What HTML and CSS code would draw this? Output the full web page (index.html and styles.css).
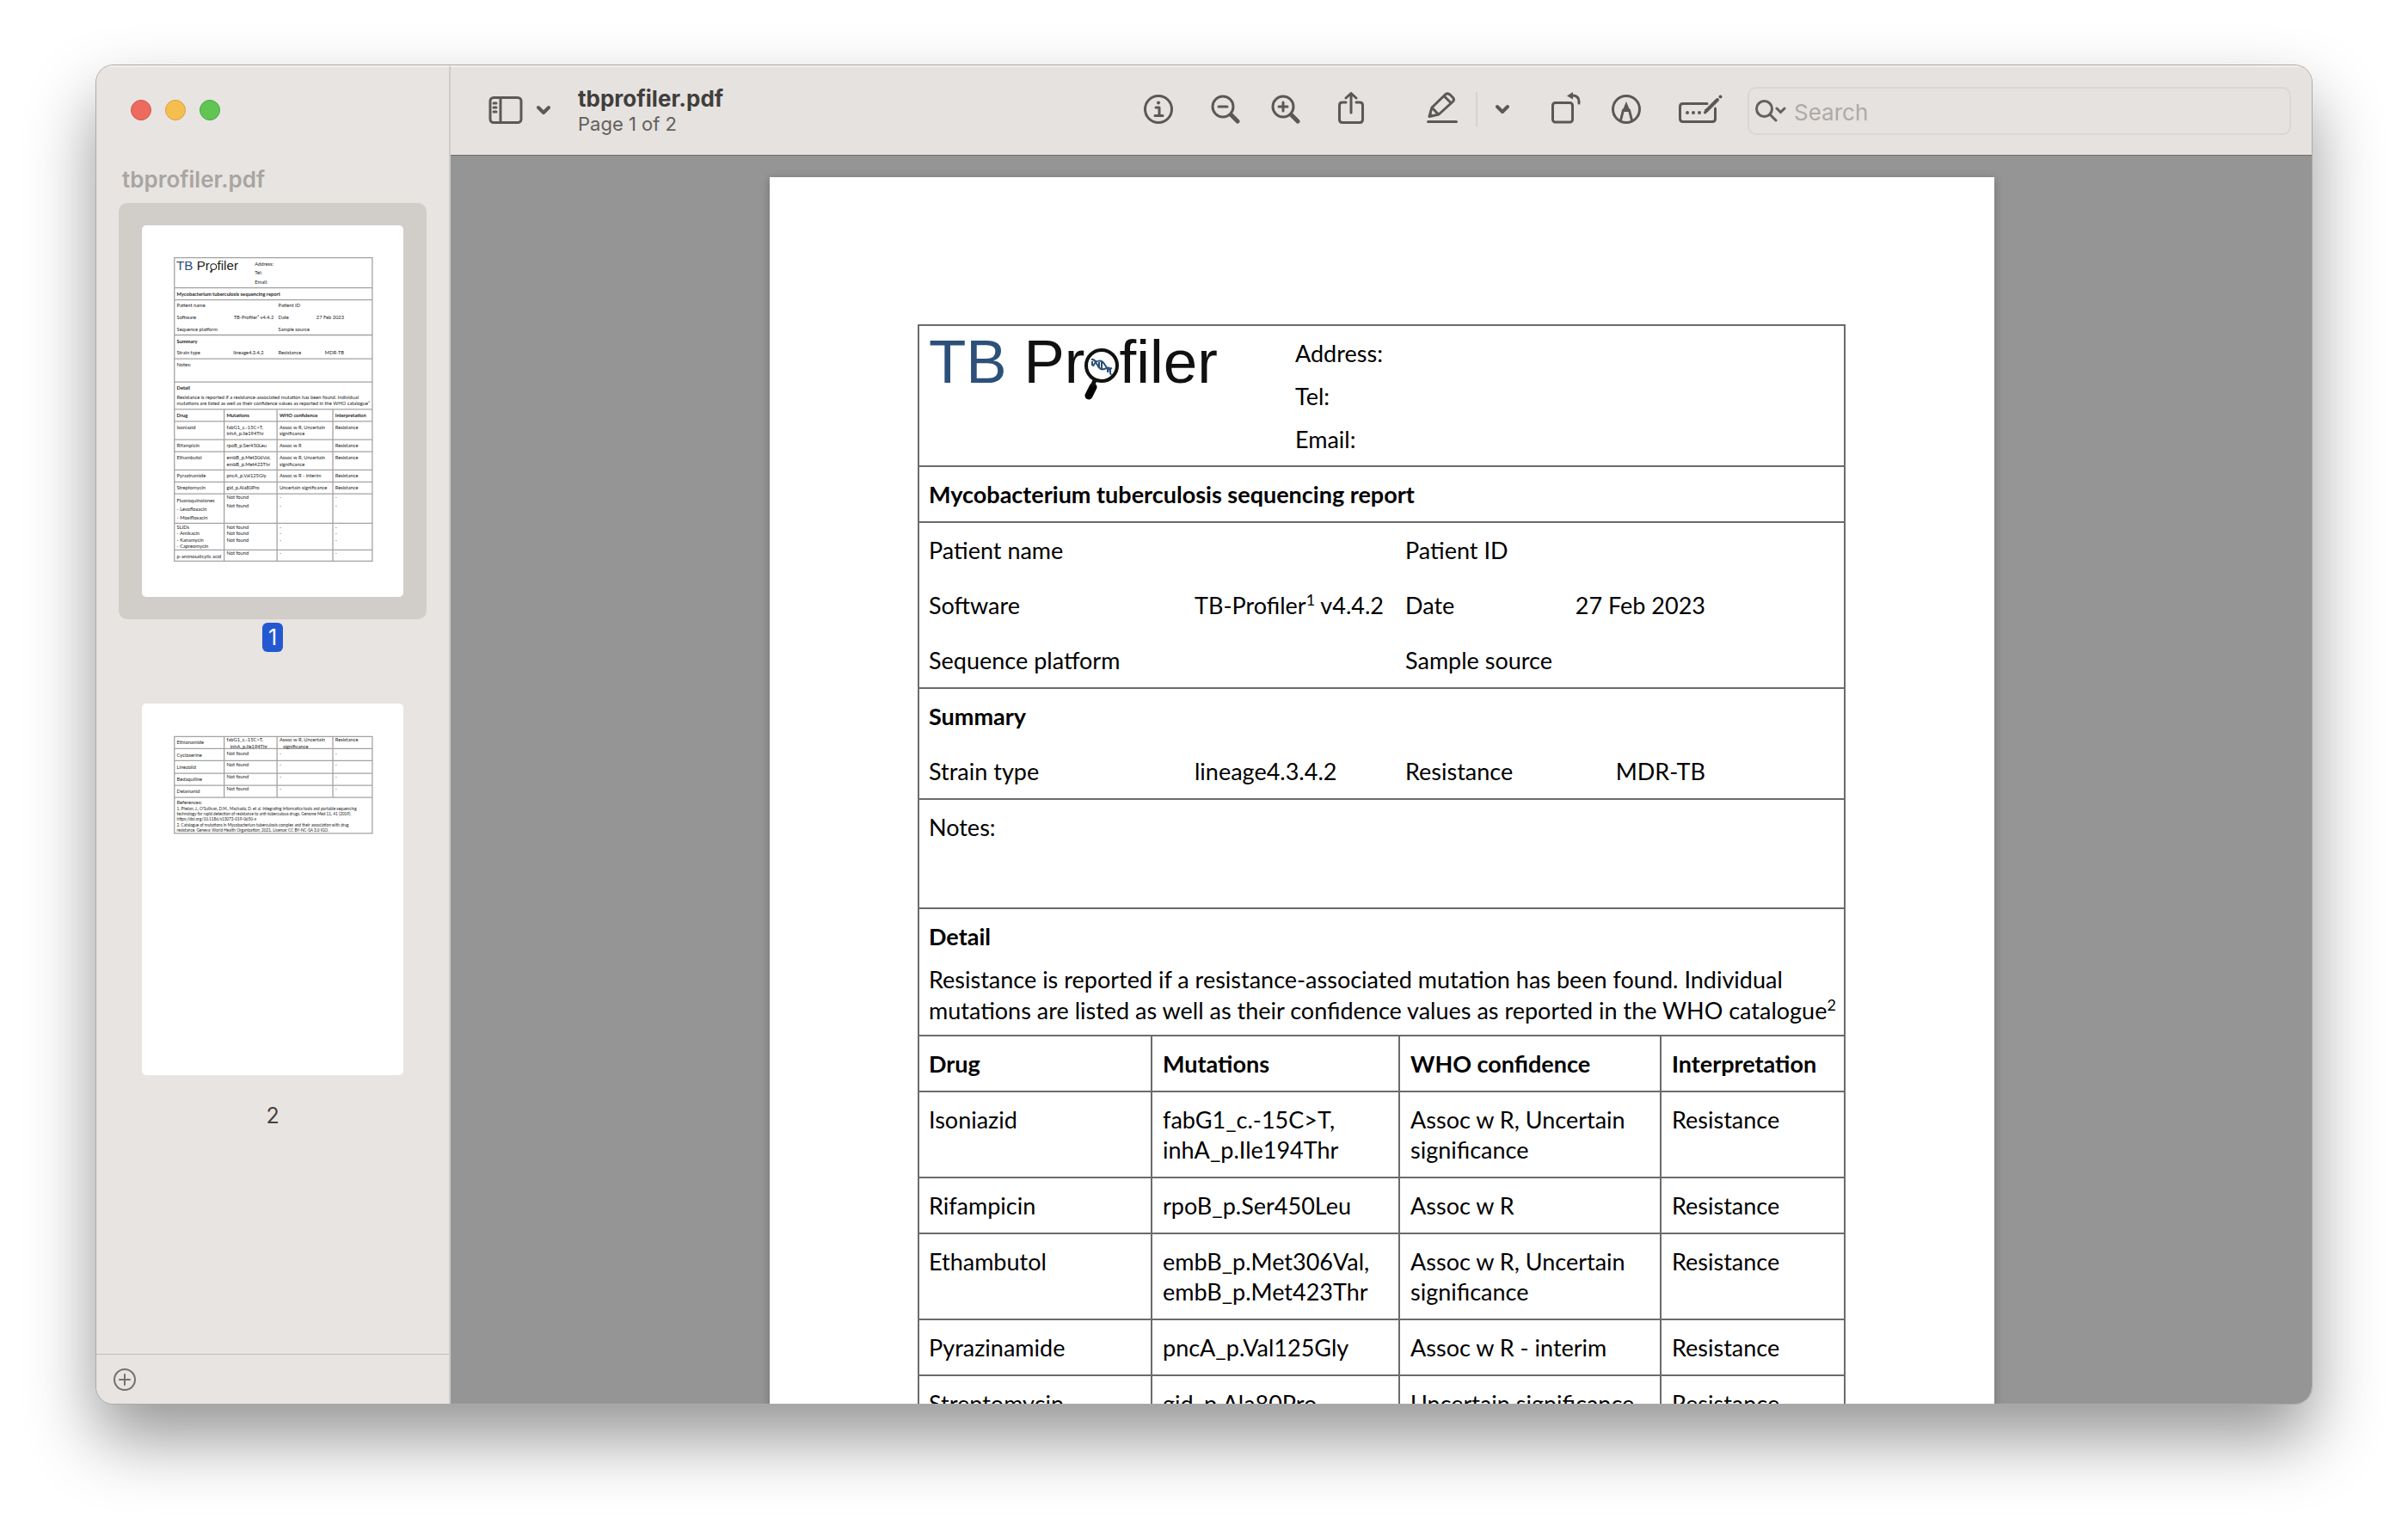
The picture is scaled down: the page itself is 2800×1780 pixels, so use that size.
FILE: index.html
```html
<!DOCTYPE html>
<html lang="en">
<head>
<meta charset="utf-8">
<title>tbprofiler.pdf</title>
<link rel="stylesheet" href="styles.css">
</head>
<body>
<div class="window">
  <aside class="sidebar">
    <div class="lights">
      <button class="light close" aria-label="Close"></button>
      <button class="light minimise" aria-label="Minimise"></button>
      <button class="light zoom" aria-label="Zoom"></button>
    </div>
    <h2 class="side-title">tbprofiler.pdf</h2>
    <div class="thumbs">
      <figure class="thumb">
        <button class="thumb-frame selected" aria-label="Go to page 1">
          <svg class="thumb-page" viewBox="-4 -4 1424 2023">
            <path class="rule" d="M173 172H1251V1824H173ZM173 336H1251M173 401H1251M173 593H1251M173 722H1251M173 849H1251M173 998H1251M173 1063H1251M173 1163H1251M173 1228H1251M173 1328H1251M173 1393H1251M173 1458H1251M173 1618H1251M173 1763H1251M444 998V1824M732 998V1824M1036 998V1824"/>
            <g class="mini-logo"><text x="184" y="239"><tspan class="blue">TB</tspan> Pr</text><text x="406" y="239">filer</text>
              <circle cx="386" cy="221" r="16"/><path d="M378 238L370 252"/></g>
            <g class="mini">
              <text x="611" y="214">Address:</text><text x="611" y="264">Tel:</text><text x="611" y="313">Email:</text>
              <text class="b" x="186" y="378">Mycobacterium tuberculosis sequencing report</text>
              <text x="186" y="443">Patient name</text><text x="739" y="443">Patient ID</text>
              <text x="186" y="507">Software</text><text x="496" y="507">TB-Profiler¹ v4.4.2</text><text x="739" y="507">Date</text><text x="946" y="507">27 Feb 2023</text>
              <text x="186" y="571">Sequence platform</text><text x="739" y="571">Sample source</text>
              <text class="b" x="186" y="636">Summary</text>
              <text x="186" y="700">Strain type</text><text x="494" y="700">lineage4.3.4.2</text><text x="739" y="700">Resistance</text><text x="993" y="700">MDR-TB</text>
              <text x="186" y="764">Notes:</text>
              <text class="b" x="186" y="892">Detail</text>
              <text x="186" y="941">Resistance is reported if a resistance-associated mutation has been found. Individual</text>
              <text x="186" y="977">mutations are listed as well as their confidence values as reported in the WHO catalogue²</text>
              <g class="b"><text x="186" y="1040">Drug</text><text x="457" y="1040">Mutations</text><text x="745" y="1040">WHO confidence</text><text x="1049" y="1040">Interpretation</text></g>
              <text x="186" y="1105">Isoniazid</text><text x="457" y="1105">fabG1_c.-15C&gt;T,</text><text x="457" y="1141">inhA_p.Ile194Thr</text><text x="745" y="1105">Assoc w R, Uncertain</text><text x="745" y="1141">significance</text><text x="1049" y="1105">Resistance</text>
              <text x="186" y="1205">Rifampicin</text><text x="457" y="1205">rpoB_p.Ser450Leu</text><text x="745" y="1205">Assoc w R</text><text x="1049" y="1205">Resistance</text>
              <text x="186" y="1270">Ethambutol</text><text x="457" y="1270">embB_p.Met306Val,</text><text x="457" y="1306">embB_p.Met423Thr</text><text x="745" y="1270">Assoc w R, Uncertain</text><text x="745" y="1306">significance</text><text x="1049" y="1270">Resistance</text>
              <text x="186" y="1370">Pyrazinamide</text><text x="457" y="1370">pncA_p.Val125Gly</text><text x="745" y="1370">Assoc w R - interim</text><text x="1049" y="1370">Resistance</text>
              <text x="186" y="1435">Streptomycin</text><text x="457" y="1435">gid_p.Ala80Pro</text><text x="745" y="1435">Uncertain significance</text><text x="1049" y="1435">Resistance</text>
              <text x="186" y="1502">Fluoroquinolones</text><text x="186" y="1551">- Levofloxacin</text><text x="186" y="1598">- Moxifloxacin</text>
              <text x="457" y="1484">Not found</text><text x="457" y="1534">Not found</text><text x="745" y="1484">-</text><text x="745" y="1534">-</text><text x="1049" y="1484">-</text><text x="1049" y="1534">-</text>
              <text x="186" y="1650">SLIDs</text><text x="186" y="1684">- Amikacin</text><text x="186" y="1720">- Kanamycin</text><text x="186" y="1754">- Capreomycin</text>
              <text x="457" y="1650">Not found</text><text x="457" y="1684">Not found</text><text x="457" y="1720">Not found</text>
              <text x="745" y="1650">-</text><text x="745" y="1684">-</text><text x="745" y="1720">-</text><text x="1049" y="1650">-</text><text x="1049" y="1684">-</text><text x="1049" y="1720">-</text>
              <text x="186" y="1808">p-aminosalicylic acid</text><text x="457" y="1790">Not found</text><text x="745" y="1790">-</text><text x="1049" y="1790">-</text>
            </g>
          </svg>
        </button>
        <figcaption class="page-no current">1</figcaption>
      </figure>
      <figure class="thumb">
        <button class="thumb-frame" aria-label="Go to page 2">
          <svg class="thumb-page" viewBox="-4 -4 1424 2023">
            <path class="rule" d="M173 175H1251V702H173ZM173 241H1251M173 307H1251M173 376H1251M173 441H1251M173 507H1251M444 175V507M732 175V507M1036 175V507"/>
            <g class="mini">
              <text x="186" y="216">Ethionamide</text><text x="457" y="203">fabG1_c.-15C&gt;T,</text><text x="477" y="238">inhA_p.Ile194Thr</text><text x="745" y="203">Assoc w R, Uncertain</text><text x="765" y="238">significance</text><text x="1049" y="203">Resistance</text>
              <text x="186" y="288">Cycloserine</text><text x="457" y="277">Not found</text><text x="745" y="277">-</text><text x="1049" y="277">-</text>
              <text x="186" y="353">Linezolid</text><text x="457" y="339">Not found</text><text x="745" y="339">-</text><text x="1049" y="339">-</text>
              <text x="186" y="418">Bedaquiline</text><text x="457" y="405">Not found</text><text x="745" y="405">-</text><text x="1049" y="405">-</text>
              <text x="186" y="484">Delamanid</text><text x="457" y="471">Not found</text><text x="745" y="471">-</text><text x="1049" y="471">-</text>
              <text x="186" y="546">References:</text>
            </g>
            <g class="mini notes">
              <text x="186" y="578">1. Phelan, J., O'Sullivan, D.M., Machado, D. et al. Integrating informatics tools and portable sequencing</text>
              <text x="186" y="607">technology for rapid detection of resistance to anti-tuberculous drugs. Genome Med 11, 41 (2019).</text>
              <text x="186" y="635">https://doi.org/10.1186/s13073-019-0650-x</text>
              <text x="186" y="665">2. Catalogue of mutations in Mycobacterium tuberculosis complex and their association with drug</text>
              <text x="186" y="693">resistance. Geneva: World Health Organization; 2021. Licence: CC BY-NC-SA 3.0 IGO.</text>
            </g>
          </svg>
        </button>
        <figcaption class="page-no">2</figcaption>
      </figure>
    </div>
    <footer class="side-foot">
      <button class="icon" aria-label="Add page"><svg width="26" height="26" viewBox="0 0 26 26"><circle cx="13" cy="13" r="12"/><path d="M13 7V19M7 13H19"/></svg></button>
    </footer>
  </aside>

  <div class="viewer">
    <header class="toolbar">
      <button class="icon view-menu" aria-label="Sidebar view">
        <svg width="40" height="32" viewBox="0 0 40 32"><rect x="2" y="1.500" width="36" height="29" rx="4"/><path d="M14 2V30M6 8H9M6 13H9M6 18H9"/></svg>
        <svg width="16" height="12" viewBox="0 0 16 12"><path class="heavy" d="M2 3L8 9L14 3"/></svg>
      </button>
      <div class="heading">
        <h1 class="title">tbprofiler.pdf</h1>
        <p class="subtitle">Page 1 of 2</p>
      </div>
      <div class="tools">
        <button class="icon" aria-label="Info"><svg width="34" height="40" viewBox="0 0 34 40"><circle cx="17" cy="20" r="15.500"/><path d="M14 18H18V27M13 27.500H22"/><circle class="solid" cx="17" cy="12.500" r="2"/></svg></button>
        <div class="pair">
          <button class="icon" aria-label="Zoom out"><svg width="34" height="40" viewBox="0 0 34 40"><circle cx="14" cy="17" r="12"/><path d="M9 17H19"/><path class="thick" d="M23.500 26.500L31 34"/></svg></button>
          <button class="icon" aria-label="Zoom in"><svg width="34" height="40" viewBox="0 0 34 40"><circle cx="14" cy="17" r="12"/><path d="M9 17H19M14 12V22"/><path class="thick" d="M23.500 26.500L31 34"/></svg></button>
        </div>
        <button class="icon" aria-label="Share"><svg width="30" height="40" viewBox="0 0 30 40"><path d="M9 12H5Q1.500 12 1.500 15.500V32Q1.500 35.500 5 35.500H25Q28.500 35.500 28.500 32V15.500Q28.500 12 25 12H21M15 24V2M9 7L15 1.500L21 7"/></svg></button>
        <div class="split">
          <button class="icon" aria-label="Highlight"><svg width="36" height="40" viewBox="0 0 36 40"><path d="M1.500 34.500H34.500M3 28.500L6 18L22 2.500Q24.500 1 27 3L30.500 6.500Q32.500 9 30.500 11L14 26ZM6.500 18.500L13 25.500M20.500 5L28 12.500"/><path class="solid" d="M2 30L4 24L8 27.500Z"/></svg></button>
          <span class="divider"></span>
          <button class="icon" aria-label="Highlight colours"><svg width="16" height="12" viewBox="0 0 16 12"><path class="heavy" d="M2 3L8 9L14 3"/></svg></button>
        </div>
        <div class="pair">
          <button class="icon" aria-label="Rotate"><svg width="34" height="40" viewBox="0 0 34 40"><rect x="1.500" y="12.500" width="23" height="22.500" rx="3"/><path d="M32 13V11Q32 4 24 4"/><path class="solid" d="M25 0V8.500L18 4.500Z"/></svg></button>
          <button class="icon" aria-label="Markup"><svg width="34" height="40" viewBox="0 0 34 40"><circle cx="17" cy="20" r="15.500"/><path d="M10.500 33L13.500 21M23.500 33L20.500 21"/><path class="solid" d="M17 11L12 23H22Z"/></svg></button>
        </div>
        <button class="icon" aria-label="Form filling"><svg width="52" height="40" viewBox="0 0 52 40"><path d="M33 13.500H5Q1.500 13.500 1.500 17V31Q1.500 34.500 5 34.500H39Q42.500 34.500 42.500 31V19"/><path class="heavy" d="M32 22L45 9"/><path d="M30.500 24L32 21"/><circle class="solid" cx="48.500" cy="5.500" r="2"/><circle class="solid" cx="10" cy="24" r="2"/><circle class="solid" cx="17" cy="24" r="2"/><circle class="solid" cx="24" cy="24" r="2"/></svg></button>
      </div>
      <label class="search">
        <svg class="search-icon" width="36" height="28" viewBox="0 0 36 28"><circle cx="10.500" cy="11.500" r="9"/><path d="M17 18L24 25M25 11L29.500 15.500L34 11"/></svg>
        <input type="search" placeholder="Search" aria-label="Search">
      </label>
    </header>

    <main class="canvas">
      <article class="page">
        <div class="report">
          <section class="band masthead">
            <div class="logo"><span class="blue">TB</span> Pr<svg class="lens" width="40" height="64" viewBox="0 0 40 64"><circle cx="20" cy="22" r="18"/><path class="grip" d="M10 47L5 57"/><path class="neck" d="M13 37L9 46"/><path class="dna" d="M8 15C15 13 14 29 23 26S27 24 31 33M10 23C13 15 20 15 23 20S27 27 32 25M9 17V22M13 16V20M17 18V25M20 18V26M27 26V30M30 26V31"/></svg>filer</div>
            <ul class="contact"><li>Address:</li><li>Tel:</li><li>Email:</li></ul>
          </section>
          <section class="band"><h2>Mycobacterium tuberculosis sequencing report</h2></section>
          <section class="band fields">
            <span>Patient name</span><span></span><span>Patient ID</span><span></span>
            <span>Software</span><span class="end inset">TB-Profiler<sup>1</sup> v4.4.2</span><span>Date</span><span class="end">27 Feb 2023</span>
            <span>Sequence platform</span><span></span><span>Sample source</span><span></span>
          </section>
          <section class="band fields">
            <h2 class="full">Summary</h2>
            <span>Strain type</span><span>lineage4.3.4.2</span><span>Resistance</span><span class="end">MDR-TB</span>
          </section>
          <section class="band notes-band"><p>Notes:</p></section>
          <section class="band detail">
            <h2>Detail</h2>
            <p>Resistance is reported if a resistance-associated mutation has been found. Individual<br>mutations are listed as well as their confidence values as reported in the WHO catalogue<sup>2</sup></p>
          </section>
          <table class="drugs">
            <colgroup><col class="c-drug"><col class="c-mut"><col class="c-who"><col class="c-int"></colgroup>
            <thead><tr><th>Drug</th><th>Mutations</th><th>WHO confidence</th><th>Interpretation</th></tr></thead>
            <tbody>
              <tr><td>Isoniazid</td><td>fabG1_c.-15C&gt;T,<br>inhA_p.Ile194Thr</td><td>Assoc w R, Uncertain<br>significance</td><td>Resistance</td></tr>
              <tr><td>Rifampicin</td><td>rpoB_p.Ser450Leu</td><td>Assoc w R</td><td>Resistance</td></tr>
              <tr><td>Ethambutol</td><td>embB_p.Met306Val,<br>embB_p.Met423Thr</td><td>Assoc w R, Uncertain<br>significance</td><td>Resistance</td></tr>
              <tr><td>Pyrazinamide</td><td>pncA_p.Val125Gly</td><td>Assoc w R - interim</td><td>Resistance</td></tr>
              <tr><td>Streptomycin</td><td>gid_p.Ala80Pro</td><td>Uncertain significance</td><td>Resistance</td></tr>
            </tbody>
          </table>
        </div>
      </article>
    </main>
  </div>
</div>
</body>
</html>
```
FILE: styles.css
```css
* { box-sizing: border-box; }

body {
  margin: 0;
  height: 100vh;
  padding: 76px 112px 148px;
  display: flex;
  background: #fff;
  font-family: Inter, "Liberation Sans", sans-serif;
  overflow: hidden;
}

h1, h2, p, ul, figure { margin: 0; padding: 0; }
ul { list-style: none; }

button {
  border: 0;
  padding: 0;
  background: none;
  font: inherit;
}

.window {
  flex: 1;
  display: flex;
  min-height: 0;
  border-radius: 20px;
  overflow: hidden;
  background: #e7e3e0;
  box-shadow: 0 0 0 1px #aaa, 0 40px 80px rgba(0, 0, 0, 0.42);
}

/* Sidebar */
.sidebar {
  flex: 0 0 412px;
  display: flex;
  flex-direction: column;
  background: #e8e4e1;
  border-right: 2px solid #d0ccc9;
  border-top: 2px solid #f3f1ef;
}

.lights {
  display: flex;
  gap: 16px;
  padding: 38px 40px 0;
}

.light {
  width: 24px;
  height: 24px;
  border-radius: 50%;
}

.close { background: #ed6a5e; border: 1px solid #d35549; }
.minimise { background: #f5bf4f; border: 1px solid #d9a13b; }
.zoom { background: #61c554; border: 1px solid #4ba73e; }

.side-title {
  padding: 53px 30px 11px;
  font-size: 26px;
  line-height: 32px;
  font-weight: 600;
  color: #a9a5a1;
}

.thumbs {
  flex: 1;
  min-height: 0;
  padding: 0 26px;
  overflow: hidden;
  display: flex;
  flex-direction: column;
  gap: 34px;
}

.thumb {
  display: flex;
  flex-direction: column;
  align-items: center;
}

.thumb-frame {
  display: flex;
  justify-content: center;
  width: 358px;
  padding: 26px;
  border-radius: 10px;
}

.selected { background: #d1cdc9; }

.thumb-page {
  width: 304px;
  height: 432px;
  border-radius: 5px;
  background: #fff;
}

.rule { fill: none; stroke: #a2a2a2; stroke-width: 6; }
.mini { font: 27px Lato, "Liberation Sans", sans-serif; fill: #222; }
.notes { font-size: 22px; }
.b { font-weight: 700; }
.blue { color: #2c5079; fill: #2c5079; }
.mini-logo { font: 71px "Liberation Sans", Arial, sans-serif; fill: #222; }
.mini-logo circle { fill: none; stroke: #222; stroke-width: 5; }
.mini-logo path { stroke: #222; stroke-width: 9; }

.page-no {
  margin-top: 4px;
  padding: 0 7px;
  border-radius: 6px;
  font-size: 25px;
  line-height: 34px;
  color: #454341;
}

.current { background: #2458d3; color: #fff; }

.side-foot {
  height: 58px;
  padding: 0 20px;
  display: flex;
  align-items: center;
  border-top: 1px solid #bfbbb8;
}

.side-foot .icon svg { stroke: #74716f; stroke-width: 2; }

/* Toolbar */
.viewer {
  flex: 1;
  min-width: 0;
  display: flex;
  flex-direction: column;
}

.toolbar {
  flex: none;
  display: flex;
  align-items: center;
  height: 105px;
  padding: 0 24px 0 44px;
  background: #e6e2df;
  border-top: 2px solid #f3f1ef;
  border-bottom: 1px solid #6e6e6e;
}

.icon { display: flex; align-items: center; }

.icon svg {
  fill: none;
  stroke: #5c5855;
  stroke-width: 3;
  stroke-linecap: round;
  stroke-linejoin: round;
}

.icon .solid { fill: #5c5855; stroke: none; }
.icon .heavy { stroke-width: 4; }
.icon .thick { stroke-width: 5; }

.view-menu {
  gap: 16px;
  padding-bottom: 2px;
}

.heading {
  flex: 1;
  padding-left: 32px;
  color: #403e3c;
}

.title {
  font-size: 26px;
  line-height: 30px;
  font-weight: 700;
}

.subtitle {
  font-size: 22px;
  line-height: 28px;
  color: #63605d;
}

.tools {
  display: flex;
  align-items: center;
  gap: 44px;
  margin-right: 28px;
  padding-bottom: 4px;
}

.pair { display: flex; gap: 36px; }

.split {
  display: flex;
  align-items: center;
  gap: 21px;
  padding: 0 5px 0 29px;
}

.divider {
  width: 2px;
  height: 40px;
  background: #d6d2cf;
}

.search {
  display: flex;
  align-items: center;
  gap: 9px;
  width: 632px;
  height: 56px;
  padding: 0 7px;
  border: 2px solid #dad6d3;
  border-radius: 10px;
}

.search-icon {
  fill: none;
  stroke: #63605d;
  stroke-width: 3;
  stroke-linecap: round;
}

.search input {
  flex: 1;
  min-width: 0;
  border: 0;
  padding: 3px 0 0;
  outline: 0;
  background: none;
  font: 26px Inter, "Liberation Sans", sans-serif;
}

.search input::placeholder { color: #aeaaa7; opacity: 1; }

/* Document */
.canvas {
  flex: 1;
  min-height: 0;
  padding: 25px 0 0 2px;
  overflow: hidden;
  background: #959595;
}

.page {
  width: 1424px;
  min-height: 100%;
  margin: 0 auto;
  padding: 171px 173px 171px 172px;
  background: #fff;
  box-shadow: 0 2px 10px rgba(0, 0, 0, 0.25);
  font-family: Lato, "Liberation Sans", sans-serif;
  font-size: 27px;
  line-height: 36px;
  color: #000;
}

.report { border: 2px solid #6b6b6b; border-width: 2px 2px 0; }
.report h2 { font-size: 27px; font-weight: 700; }

.report sup {
  font-size: 18px;
  line-height: 0;
}

.band {
  padding: 14px 11px 13px;
  border-bottom: 2px solid #6b6b6b;
  white-space: nowrap;
}

.masthead {
  display: flex;
  height: 164px;
  padding-top: 6px;
}

.logo {
  flex: 0 0 426px;
  font-family: "Liberation Sans", Arial, sans-serif;
  font-size: 71px;
  line-height: 72px;
  color: #111;
}

.lens {
  vertical-align: -22px;
  fill: none;
  stroke: #111;
  stroke-width: 4;
  overflow: visible;
}

.lens .grip { stroke: #000; stroke-width: 9; stroke-linecap: round; }
.lens .neck { stroke-width: 5; }
.lens .dna { stroke: #2c5079; stroke-width: 2; }

.contact { padding-top: 1px; }
.contact li { padding: 7px 0; }

.fields {
  display: grid;
  grid-template-columns: 309px 245px 180px 169px;
  row-gap: 28px;
}

.end { text-align: right; }
.inset { padding-right: 25px; }
.full { grid-column: 1 / -1; }
.notes-band { height: 127px; }
.detail { padding-bottom: 10px; }
.detail h2 { margin-bottom: 14px; }

.drugs {
  width: 100%;
  border-collapse: collapse;
  table-layout: fixed;
}

.c-drug { width: 270px; }
.c-mut { width: 288px; }
.c-who { width: 304px; }

.drugs th, .drugs td {
  padding: 14px 0 14px 12px;
  border: 2px solid #6b6b6b;
  border-top: 0;
  line-height: 35px;
  text-align: left;
  vertical-align: top;
}

.drugs th:first-child, .drugs td:first-child {
  padding-left: 11px;
  border-left: 0;
}

.drugs th:last-child, .drugs td:last-child { border-right: 0; }
```
